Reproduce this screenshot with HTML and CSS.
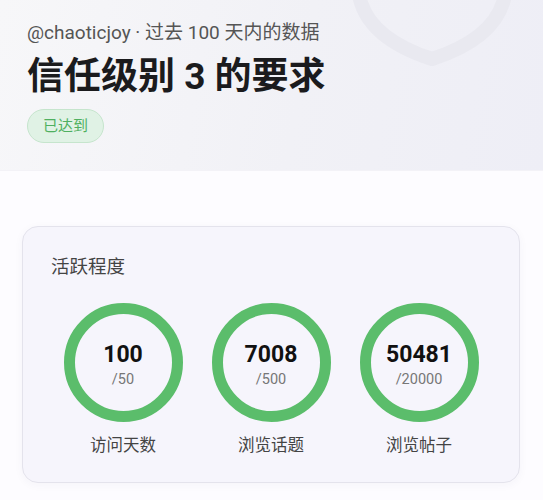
FILE: index.html
```html
<!DOCTYPE html>
<html lang="zh-CN">
<head>
    <meta charset="UTF-8">
    <meta name="viewport" content="width=device-width, initial-scale=1.0">
    <title>信任级别 3 的要求</title>
    <link rel="stylesheet" href="styles.css">
</head>
<body>
    <header class="hero">
        <svg class="hero-shield" viewBox="0 0 200 80" width="200" height="80" aria-hidden="true">
            <path d="M16 -40 L16 -5 Q 24 38 89 59 Q 154 38 162 -5 L162 -40" fill="none" stroke="#e9e9f0" stroke-width="14" stroke-linejoin="round"/>
        </svg>
        <p class="hero-meta">@chaoticjoy · 过去 100 天内的数据</p>
        <h1 class="hero-title">信任级别 3 的要求</h1>
        <span class="badge">已达到</span>
    </header>

    <main class="content">
        <section class="card">
            <h2 class="card-title">活跃程度</h2>
            <div class="stats">
                <div class="stat">
                    <div class="ring">
                        <span class="ring-value">100</span>
                        <span class="ring-target">/50</span>
                    </div>
                    <span class="stat-label">访问天数</span>
                </div>
                <div class="stat">
                    <div class="ring">
                        <span class="ring-value">7008</span>
                        <span class="ring-target">/500</span>
                    </div>
                    <span class="stat-label">浏览话题</span>
                </div>
                <div class="stat">
                    <div class="ring">
                        <span class="ring-value">50481</span>
                        <span class="ring-target">/20000</span>
                    </div>
                    <span class="stat-label">浏览帖子</span>
                </div>
            </div>
        </section>
    </main>
</body>
</html>
```

FILE: styles.css
```css
body {
    margin: 0;
    font-family: Roboto, "Noto Sans CJK SC", sans-serif;
    background-color: #fdfcff;
    color: #222;
}
.hero {
    position: relative;
    overflow: hidden;
    display: flex;
    flex-direction: column;
    align-items: flex-start;
    padding: 20px 27px 27px;
    background: linear-gradient(100deg, #f7f7f9 0%, #f1f1f6 55%, #eeeef6 100%);
    border-bottom: 1px solid #f3f2f7;
}
.hero-shield {
    position: absolute;
    top: 0;
    right: 0;
}
.hero-meta {
    position: relative;
    margin: 0;
    font-size: 19px;
    line-height: 26px;
    color: #555;
}
.hero-title {
    position: relative;
    margin: 8px 0 0;
    font-size: 37px;
    line-height: 46px;
    font-weight: 700;
    color: #1b1b1d;
}
.badge {
    position: relative;
    margin-top: 9px;
    padding: 0 15px;
    height: 32px;
    line-height: 32px;
    border-radius: 17px;
    border: 1px solid #c6e5cd;
    background-color: #e0f2e5;
    color: #4fb060;
    font-size: 15px;
}
.content {
    padding: 55px 23px 20px 22px;
}
.card {
    padding: 28px 28px 24px;
    background-color: #f6f5fc;
    border: 1px solid #e4e3ec;
    border-radius: 16px;
    box-shadow: 0 2px 10px rgba(40, 40, 90, 0.04);
}
.card-title {
    margin: 0;
    font-size: 18.5px;
    line-height: 24px;
    font-weight: 400;
    color: #444;
}
.stats {
    display: flex;
    justify-content: center;
    gap: 29px;
    margin-top: 24px;
}
.stat {
    display: flex;
    flex-direction: column;
    align-items: center;
    gap: 12px;
}
.ring {
    width: 119px;
    height: 119px;
    box-sizing: border-box;
    padding-top: 4px;
    border: 11px solid #5bbd6b;
    border-radius: 50%;
    display: flex;
    flex-direction: column;
    align-items: center;
    justify-content: center;
}
.ring-value {
    font-size: 23px;
    line-height: 28px;
    font-weight: 700;
    color: #111;
}
.ring-target {
    margin-top: 2px;
    font-size: 14.5px;
    line-height: 18px;
    color: #777;
}
.stat-label {
    font-size: 16.5px;
    line-height: 24px;
    color: #444;
}
```
